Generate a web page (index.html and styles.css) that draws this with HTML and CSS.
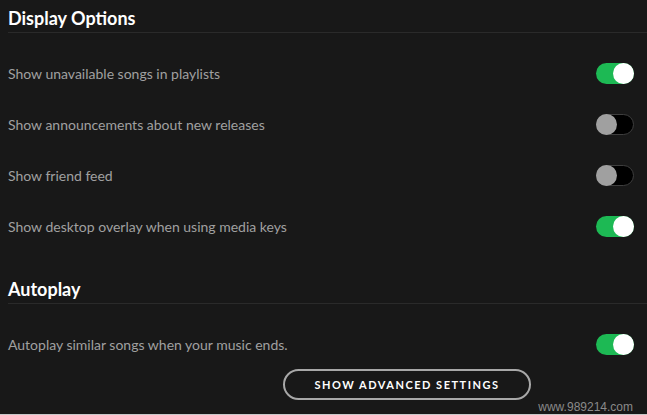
FILE: index.html
```html
<!DOCTYPE html>
<html>
<head>
<meta charset="utf-8">
<link rel="stylesheet" href="styles.css">
</head>
<body>
<div class="page">
  <section class="section">
    <h2 class="heading">Display Options</h2>
    <div class="rows">
      <div class="row"><span class="label">Show unavailable songs in playlists</span><span class="toggle on"><span class="knob"></span></span></div>
      <div class="row"><span class="label">Show announcements about new releases</span><span class="toggle off"><span class="knob"></span></span></div>
      <div class="row"><span class="label">Show friend feed</span><span class="toggle off"><span class="knob"></span></span></div>
      <div class="row"><span class="label">Show desktop overlay when using media keys</span><span class="toggle on"><span class="knob"></span></span></div>
    </div>
  </section>
  <section class="section autoplay">
    <h2 class="heading">Autoplay</h2>
    <div class="rows">
      <div class="row last"><span class="label">Autoplay similar songs when your music ends.</span><span class="toggle on"><span class="knob"></span></span></div>
    </div>
  </section>
  <div class="actions">
    <button class="btn">SHOW ADVANCED SETTINGS</button>
    <span class="watermark">www.989214.com</span>
  </div>
</div>
</body>
</html>
```
FILE: styles.css
```css
html, body {
  margin: 0;
  padding: 0;
  background: #181818;
  height: 100%;
  overflow: hidden;
}
.page {
  width: 647px;
  height: 415px;
  display: flex;
  flex-direction: column;
  font-family: Lato, "Liberation Sans", sans-serif;
  box-sizing: border-box;
  border-bottom: 1px solid #c8c8c8;
}
.section {
  padding-left: 8px;
}
.heading {
  margin: 0;
  padding-top: 4px;
  height: 28px;
  line-height: 28px;
  font-size: 18px;
  font-weight: 700;
  color: #ffffff;
  border-bottom: 1px solid #2a2a2a;
}
.rows {
  display: flex;
  flex-direction: column;
  padding-top: 15px;
  padding-right: 13px;
}
.row {
  height: 51px;
  display: flex;
  align-items: center;
  justify-content: space-between;
}
.row.last { height: 50px; }
.label {
  font-size: 14px;
  color: #a0a0a0;
}
.toggle {
  width: 38px;
  height: 21px;
  border-radius: 11px;
  box-sizing: border-box;
  display: flex;
  align-items: center;
  position: relative;
}
.toggle.on {
  background: #1db954;
  justify-content: flex-end;
}
.toggle.off {
  background: #000;
  border: 1px solid #3e3e3e;
  justify-content: flex-start;
}
.knob {
  width: 21px;
  height: 21px;
  border-radius: 50%;
  background: #fff;
}
.toggle.off .knob {
  background: #a0a0a0;
  margin-left: -1px;
}
.autoplay {
  margin-top: 19px;
}
.actions {
  display: flex;
  align-items: flex-start;
  padding-left: 283px;
}
.btn {
  width: 248px;
  height: 31px;
  border: 2px solid #a8a8a8;
  border-radius: 16px;
  background: transparent;
  color: #ffffff;
  font-family: Lato, "Liberation Sans", sans-serif;
  font-weight: 700;
  font-size: 11px;
  letter-spacing: 1.5px;
  padding: 0;
}
.watermark {
  margin-left: auto;
  margin-right: 14px;
  margin-top: 31px;
  font-family: "Liberation Sans", sans-serif;
  font-size: 12px;
  color: #8a8a8a;
}
```
